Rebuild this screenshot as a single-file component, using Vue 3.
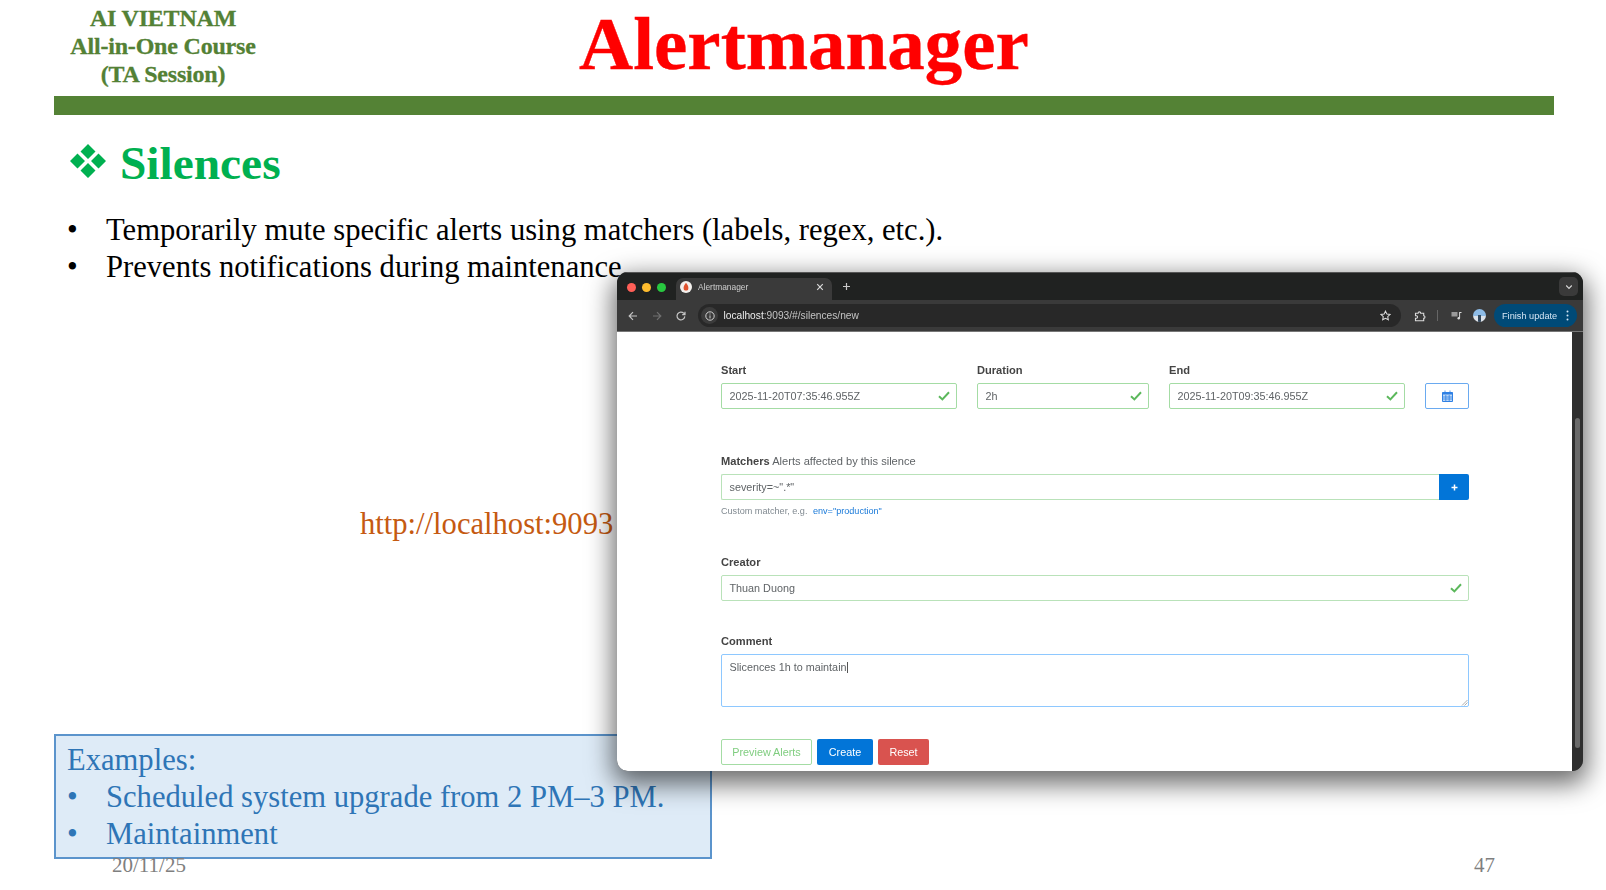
<script setup>
const topBullets = [
  'Temporarily mute specific alerts using matchers (labels, regex, etc.).',
  'Prevents notifications during maintenance.'
]
const examples = ['Scheduled system upgrade from 2 PM–3 PM.', 'Maintainment']
const timeFields = [
  { label: 'Start', value: '2025-11-20T07:35:46.955Z' },
  { label: 'Duration', value: '2h' },
  { label: 'End', value: '2025-11-20T09:35:46.955Z' }
]
</script>

<template>
  <div class="slide">
    <header class="head">
      <div class="org">
        <div>AI VIETNAM</div>
        <div>All-in-One Course</div>
        <div>(TA Session)</div>
      </div>
      <h1 class="title">Alertmanager</h1>
    </header>
    <div class="bar"></div>

    <h2 class="section">
      <svg class="diamonds" width="36" height="34" viewBox="0 0 36 34">
        <path d="M18 0l7.5 7.5-7.5 7.5-7.5-7.5zM7.5 9.5L15 17l-7.5 7.5L0 17zM28.5 9.5L36 17l-7.5 7.5L21 17zM18 19l7.5 7.5L18 34l-7.5-7.5z" fill="#00b050" />
      </svg>
      <span>Silences</span>
    </h2>

    <ul class="points">
      <li v-for="t in topBullets" :key="t">{{ t }}</li>
    </ul>

    <div class="url">http://localhost:9093</div>

    <div class="callout">
      <div>Examples:</div>
      <ul class="points inner">
        <li v-for="t in examples" :key="t">{{ t }}</li>
      </ul>
    </div>

    <footer class="foot">
      <span>20/11/25</span>
      <span>47</span>
    </footer>

    <div class="window">
      <div class="tabstrip">
        <div class="dots">
          <i class="dot red"></i><i class="dot yellow"></i><i class="dot green"></i>
        </div>
        <div class="tab">
          <svg width="12" height="12" viewBox="0 0 12 12">
            <circle cx="6" cy="6" r="6" fill="#f4f1ee" />
            <path d="M6 1.8C7.6 4 8.4 5.4 8.4 7A2.4 2.6 0 0 1 3.6 7C3.6 5.4 4.4 4 6 1.8z" fill="#e0532f" />
          </svg>
          <span class="tabname">Alertmanager</span>
          <svg class="tabx" width="8" height="8" viewBox="0 0 8 8">
            <path d="M1.2 1.2l5.6 5.6M6.8 1.2L1.2 6.8" stroke="#d8d8d8" stroke-width="1.2" />
          </svg>
        </div>
        <svg class="plus" width="9" height="9" viewBox="0 0 9 9">
          <path d="M4.5 1v7M1 4.5h7" stroke="#c8c8c8" stroke-width="1.2" />
        </svg>
        <div class="tabmenu">
          <svg width="8" height="6" viewBox="0 0 8 6">
            <path d="M1.2 1.5L4 4.3l2.8-2.8" stroke="#d5d5d5" stroke-width="1.2" fill="none" />
          </svg>
        </div>
      </div>

      <div class="toolbar">
        <svg class="nav" width="12" height="12" viewBox="0 0 12 12">
          <path d="M10 6H2.5M6 2.2L2.2 6 6 9.8" stroke="#c4c4c4" stroke-width="1.2" fill="none" />
        </svg>
        <svg class="nav" width="12" height="12" viewBox="0 0 12 12">
          <path d="M2 6h7.5M6 2.2L9.8 6 6 9.8" stroke="#707070" stroke-width="1.2" fill="none" />
        </svg>
        <svg class="nav" width="12" height="12" viewBox="0 0 12 12">
          <path d="M9.8 6.4A3.9 3.9 0 1 1 8.7 3.2L10 4.5M10 1.8v2.9H7.2" stroke="#c4c4c4" stroke-width="1.2" fill="none" />
        </svg>
        <div class="omnibox">
          <span class="siteinfo">
            <svg width="10" height="10" viewBox="0 0 10 10">
              <circle cx="5" cy="5" r="4.2" stroke="#d0d0d0" stroke-width="1" fill="none" />
              <path d="M5 4.4v3M5 2.5v1" stroke="#d0d0d0" stroke-width="1" />
            </svg>
          </span>
          <span class="address"><b>localhost</b>:9093/#/silences/new</span>
          <svg class="star" width="11" height="11" viewBox="0 0 12 12">
            <path d="M6 1.2l1.5 3.2 3.5.4-2.6 2.4.7 3.4L6 9l-3.1 1.7.7-3.4L1 4.8l3.5-.4z" stroke="#dcdcdc" stroke-width="1.1" fill="none" />
          </svg>
        </div>
        <svg class="ext" width="12" height="12" viewBox="0 0 12 12">
          <path d="M1.5 3.2h2.6a1.3 1.3 0 0 1 2.6 0h3v2.6a1.3 1.3 0 0 1 0 2.6v2.4H1.5V8.2h.9a1.2 1.2 0 0 0 0-2.4h-.9z" stroke="#dcdcdc" stroke-width="1.1" fill="none" />
        </svg>
        <i class="sep"></i>
        <svg class="media" width="11" height="10" viewBox="0 0 11 10">
          <path d="M0.5 1h6v4.5h-6z" fill="#9a9a9a" />
          <path d="M8.2 1.5h2.3M8.6 1.5v5.5" stroke="#dcdcdc" stroke-width="1" />
          <circle cx="7.7" cy="7.2" r="1.2" fill="#dcdcdc" />
        </svg>
        <div class="avatar"><i></i></div>
        <div class="update">
          <span>Finish update</span>
          <svg width="3" height="11" viewBox="0 0 3 11">
            <circle cx="1.5" cy="1.5" r="1" fill="#d5e6f5" />
            <circle cx="1.5" cy="5.5" r="1" fill="#d5e6f5" />
            <circle cx="1.5" cy="9.5" r="1" fill="#d5e6f5" />
          </svg>
        </div>
      </div>

      <div class="viewport">
        <div class="page">
          <div class="form">
            <div class="times">
              <div v-for="f in timeFields" :key="f.label">
                <div class="label">{{ f.label }}</div>
                <div class="input ok">
                  <span>{{ f.value }}</span>
                  <svg width="12" height="10" viewBox="0 0 12 10">
                    <path d="M1 5.2l3.4 3.2L11 1.2" stroke="#5cb85c" stroke-width="2" fill="none" />
                  </svg>
                </div>
              </div>
              <div class="calwrap">
                <div class="calbtn">
                  <svg width="11" height="12" viewBox="0 0 11 12">
                    <path d="M0.5 2.5h10v9h-10z" fill="#bcd8f7" stroke="#2f80e4" stroke-width="1" />
                    <path d="M0.5 2.5h10v2h-10z" fill="#2f80e4" />
                    <path d="M3 0.5v2M8 0.5v2M3.8 5v6M7.2 5v6M1 7h9M1 9h9" stroke="#2f80e4" stroke-width=".8" />
                  </svg>
                </div>
              </div>
            </div>

            <div class="label matchers"><b>Matchers</b> Alerts affected by this silence</div>
            <div class="matcherline">
              <div class="input soft grow"><span>severity=~".*"</span></div>
              <div class="addbtn">
                <svg width="7" height="7" viewBox="0 0 7 7">
                  <path d="M3.5 .5v6M.5 3.5h6" stroke="#fff" stroke-width="1.5" />
                </svg>
              </div>
            </div>
            <div class="hint">Custom matcher, e.g. <span class="sample">env="production"</span></div>

            <div class="label creator">Creator</div>
            <div class="input soft">
              <span>Thuan Duong</span>
              <svg width="12" height="10" viewBox="0 0 12 10">
                <path d="M1 5.2l3.4 3.2L11 1.2" stroke="#5cb85c" stroke-width="2" fill="none" />
              </svg>
            </div>

            <div class="label comment">Comment</div>
            <div class="textarea">
              <span>Slicences 1h to maintain</span><i class="caret"></i>
              <svg class="grip" width="7" height="7" viewBox="0 0 7 7">
                <path d="M1 6.5L6.5 1M3.5 6.5l3-3" stroke="#9a9a9a" stroke-width=".8" />
              </svg>
            </div>

            <div class="actions">
              <div class="btn preview">Preview Alerts</div>
              <div class="btn create">Create</div>
              <div class="btn reset">Reset</div>
            </div>
          </div>
        </div>
        <div class="scroll"><i class="thumb"></i></div>
      </div>
    </div>
  </div>
</template>

<style scoped>
.slide {
  position: relative;
  width: 1606px;
  height: 890px;
  padding: 0 52px 0 54px;
  box-sizing: border-box;
  overflow: hidden;
  background: #fff;
  font-family: "Liberation Serif", "Times New Roman", serif;
  color: #000;
}
.head {
  display: grid;
  grid-template-columns: 218px 1fr 218px;
  height: 96px;
}
.org {
  padding-top: 4px;
  text-align: center;
  color: #538135;
  font-weight: 700;
  font-size: 24px;
  line-height: 28.2px;
  letter-spacing: -0.2px;
  -webkit-text-stroke: 0.3px #538135;
}
.title {
  margin: 0;
  text-align: center;
  color: #ff0000;
  font-weight: 700;
  font-size: 75px;
  line-height: 88px;
  -webkit-text-stroke: 0.4px #ff0000;
}
.bar {
  height: 19px;
  background: #548235;
}
.section {
  display: flex;
  align-items: center;
  gap: 14px;
  margin: 20px 0 0 16px;
  color: #00b050;
  font-size: 47.4px;
  line-height: 56px;
  font-weight: 700;
}
.diamonds {
  position: relative;
  top: -2px;
}
.points {
  list-style: none;
  margin: 21px 0 0;
  padding: 0;
  font-size: 30.6px;
  line-height: 37px;
}
.points li {
  display: flex;
}
.points li::before {
  content: "•";
  width: 52px;
  padding-left: 13px;
  box-sizing: border-box;
  flex: none;
}
.url {
  margin: 220px 0 0 306px;
  color: #c55a11;
  font-size: 30.6px;
  line-height: 37px;
}
.callout {
  height: 125px;
  margin-top: 191px;
  width: 658px;
  box-sizing: border-box;
  padding: 5.5px 0 0 11px;
  border: 2px solid #5b94cc;
  background: #deebf7;
  color: #2e75b6;
  font-size: 30.6px;
  line-height: 37.4px;
}
.points.inner {
  margin: 0;
  line-height: 37.4px;
}
.points.inner li::before {
  width: 39px;
  padding-left: 0;
}
.foot {
  display: flex;
  justify-content: space-between;
  margin: -1px 59px 0 0;
  padding: 0 0 0 58px;
  color: #7f7f7f;
  font-size: 21px;
  line-height: 14px;
}

.window {
  position: absolute;
  z-index: 1;
  left: 617px;
  top: 272px;
  width: 966px;
  height: 499px;
  display: flex;
  flex-direction: column;
  overflow: hidden;
  border-radius: 11px;
  background: #333;
  font-family: "Liberation Sans", Arial, sans-serif;
  filter: blur(0.5px);
}
.slide::after {
  content: "";
  position: absolute;
  left: 617px;
  top: 272px;
  width: 966px;
  height: 499px;
  border-radius: 11px;
  box-shadow: 0 9px 26px 4px rgba(0, 0, 0, 0.58);
  pointer-events: none;
  z-index: 0;
}
.tabstrip {
  position: relative;
  display: flex;
  align-items: flex-end;
  height: 28px;
  flex: none;
  background: #202221;
  border-top: 1px solid #555;
  box-sizing: border-box;
}
.dots {
  display: flex;
  gap: 6px;
  width: 59px;
  padding: 0 0 8px 10px;
  box-sizing: border-box;
  align-self: flex-end;
}
.dot {
  width: 9px;
  height: 9px;
  border-radius: 50%;
}
.red { background: #ff5f57; }
.yellow { background: #febc2e; }
.green { background: #28c840; }
.tab {
  display: flex;
  align-items: center;
  width: 156px;
  height: 22px;
  padding: 0 8px 4px 4px;
  box-sizing: border-box;
  border-radius: 7px 7px 0 0;
  background: #3a3a3a;
}
.tabname {
  flex: 1;
  margin-left: 6px;
  color: #cfcfcf;
  font-size: 8.4px;
}
.plus {
  margin: 0 0 9px 10px;
}
.tabmenu {
  position: absolute;
  right: 5px;
  top: 4px;
  width: 19px;
  height: 19px;
  display: flex;
  align-items: center;
  justify-content: center;
  border-radius: 5px;
  background: #3a3a3a;
}
.toolbar {
  display: flex;
  align-items: center;
  height: 32px;
  flex: none;
  padding: 0 5px 0 10px;
  box-sizing: border-box;
  background: #3a3a3a;
  border-bottom: 1px solid #777;
}
.nav {
  margin-right: 12px;
}
.omnibox {
  display: flex;
  align-items: center;
  width: 703px;
  height: 23px;
  margin-left: -1px;
  border-radius: 12px;
  background: #282828;
}
.siteinfo {
  width: 17px;
  height: 17px;
  margin-left: 3px;
  display: flex;
  align-items: center;
  justify-content: center;
  border-radius: 50%;
  background: #3b3b3b;
}
.address {
  flex: 1;
  margin-left: 5.5px;
  color: #c4c4c4;
  font-size: 10.2px;
}
.address b {
  color: #ececec;
  font-weight: 400;
}
.star {
  margin-right: 10px;
}
.ext {
  margin-left: 13px;
}
.sep {
  width: 1px;
  height: 11px;
  margin-left: 11px;
  background: #666;
}
.media {
  margin-left: 13px;
}
.avatar {
  position: relative;
  width: 13px;
  height: 13px;
  margin-left: 11px;
  overflow: hidden;
  border-radius: 50%;
  background: linear-gradient(#8dbbe6 55%, #dde3ea 56%);
}
.avatar i {
  position: absolute;
  left: 5px;
  top: 6px;
  width: 3px;
  height: 7px;
  background: #34485c;
}
.update {
  display: flex;
  align-items: center;
  justify-content: space-between;
  width: 83px;
  height: 23px;
  margin-left: 8px;
  padding: 0 8px;
  box-sizing: border-box;
  border-radius: 12px;
  background: #004a77;
  color: #d5e6f5;
  font-size: 9.2px;
  white-space: nowrap;
}
.viewport {
  display: flex;
  flex: 1;
  min-height: 0;
}
.page {
  flex: 1;
  padding: 31px 0 0 104px;
  background: #fff;
  border-radius: 0 0 0 10px;
}
.scroll {
  position: relative;
  width: 11px;
  flex: none;
  background: #2e2e2e;
}
.thumb {
  position: absolute;
  left: 3px;
  right: 3px;
  top: 86px;
  bottom: 23px;
  border-radius: 4px;
  background: #6a6a6a;
}
.form {
  width: 748px;
  color: #5f6366;
  font-size: 10.8px;
}
.times {
  display: grid;
  grid-template-columns: 236px 172px 236px 44px;
  column-gap: 20px;
}
.label {
  height: 14px;
  margin-bottom: 6px;
  line-height: 14px;
  font-size: 11.1px;
  font-weight: 700;
  color: #444;
}
.input {
  display: flex;
  align-items: center;
  justify-content: space-between;
  height: 26px;
  padding: 0 6px 0 7.5px;
  box-sizing: border-box;
  border: 1px solid #a4dca4;
  border-radius: 2px;
  background: #fff;
}
.input.soft {
  border-color: #b9e2b9;
}
.calwrap {
  padding-top: 20px;
}
.calbtn {
  display: flex;
  align-items: center;
  justify-content: center;
  height: 26px;
  border: 1px solid #6aaaf0;
  border-radius: 2px;
  box-sizing: border-box;
}
.matchers {
  margin-top: 45px;
  margin-bottom: 6px;
  font-weight: 400;
  color: #5f6366;
}
.matchers b {
  color: #444;
}
.matcherline {
  display: flex;
}
.grow {
  flex: 1;
  border-right: 0;
  border-radius: 2px 0 0 2px;
}
.addbtn {
  display: flex;
  align-items: center;
  justify-content: center;
  width: 30px;
  height: 26px;
  border-radius: 0 2px 2px 0;
  background: #0275d8;
}
.hint {
  height: 12px;
  margin-top: 5px;
  line-height: 12px;
  font-size: 9.1px;
  color: #818a91;
}
.sample {
  margin-left: 3px;
  color: #1a7ad9;
}
.creator {
  margin-top: 38px;
}
.comment {
  margin-top: 33px;
}
.textarea {
  position: relative;
  height: 53px;
  padding: 6px 7.5px;
  box-sizing: border-box;
  border: 1px solid #8ec8ff;
  border-radius: 2px;
}
.caret {
  display: inline-block;
  width: 1px;
  height: 11px;
  background: #555;
  vertical-align: -2px;
}
.grip {
  position: absolute;
  right: 0;
  bottom: 0;
}
.actions {
  display: flex;
  gap: 5px;
  margin-top: 32px;
}
.btn {
  display: flex;
  align-items: center;
  justify-content: center;
  height: 26px;
  box-sizing: border-box;
  border-radius: 2px;
  font-size: 10.8px;
}
.preview {
  width: 91px;
  border: 1px solid #a4dca4;
  color: #7fcd7f;
}
.create {
  width: 56px;
  background: #0275d8;
  color: #fff;
}
.reset {
  width: 51px;
  background: #d9534f;
  color: #fff;
}
</style>
